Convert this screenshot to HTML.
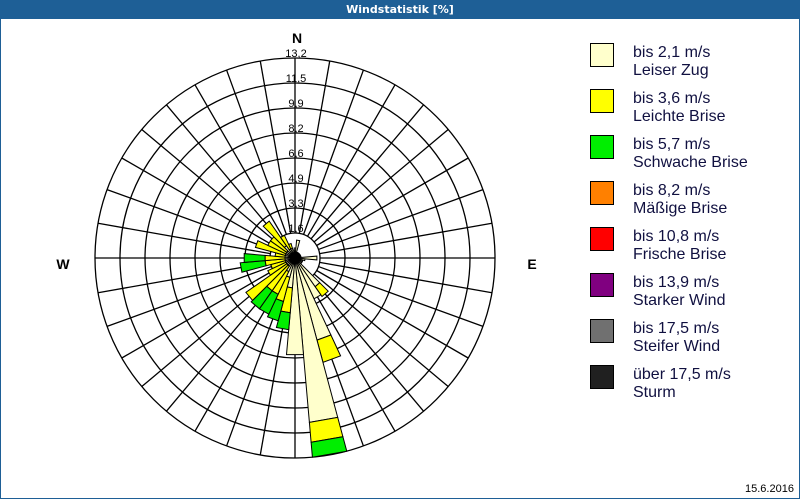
<!DOCTYPE html>
<html><head><meta charset="utf-8"><style>
html,body{margin:0;padding:0;background:#fff}
#w{position:relative;width:798px;height:498px;border:1px solid #1e5f96;border-top:none;overflow:hidden;font-family:"Liberation Sans",sans-serif}
#t{height:19px;background:#1e5f96;color:#fff;font:bold 11px "DejaVu Sans","Liberation Sans",sans-serif;text-align:center;line-height:19px}
.lg{position:absolute;left:589px;width:22px;height:22px;border:1px solid #000}
.lt{position:absolute;left:632px;font-size:16px;line-height:18px;color:#101040}
</style></head><body><div id="w">
<div id="t">Windstatistik [%]</div>
<svg id="s" width="560" height="480" style="position:absolute;left:0;top:0" font-family="Liberation Sans, sans-serif"></svg>
<div class="lg" style="top:43px;background:#ffffcc"></div><div class="lt" style="top:44px">bis 2,1 m/s<br>Leiser Zug</div>
<div class="lg" style="top:89px;background:#ffff00"></div><div class="lt" style="top:90px">bis 3,6 m/s<br>Leichte Brise</div>
<div class="lg" style="top:135px;background:#00ee00"></div><div class="lt" style="top:136px">bis 5,7 m/s<br>Schwache Brise</div>
<div class="lg" style="top:181px;background:#ff8000"></div><div class="lt" style="top:182px">bis 8,2 m/s<br>Mäßige Brise</div>
<div class="lg" style="top:227px;background:#ff0000"></div><div class="lt" style="top:228px">bis 10,8 m/s<br>Frische Brise</div>
<div class="lg" style="top:273px;background:#800080"></div><div class="lt" style="top:274px">bis 13,9 m/s<br>Starker Wind</div>
<div class="lg" style="top:319px;background:#707070"></div><div class="lt" style="top:320px">bis 17,5 m/s<br>Steifer Wind</div>
<div class="lg" style="top:365px;background:#202020"></div><div class="lt" style="top:366px">über 17,5 m/s<br>Sturm</div>
<div style="position:absolute;left:744px;top:483px;font-size:11px;color:#000">15.6.2016</div>
</div>
<script>
var s=document.getElementById('s'),cx=294,cy=258,h='';
for(var r=25;r<=200;r+=25)h+='<circle cx="'+cx+'" cy="'+cy+'" r="'+r+'" fill="none" stroke="#000" stroke-width="1.3"/>';
for(var a=0;a<360;a+=10){var t=a*Math.PI/180,sx=Math.sin(t),cy_=-Math.cos(t);
h+='<line x1="'+(cx+25*sx)+'" y1="'+(cy+25*cy_)+'" x2="'+(cx+200*sx)+'" y2="'+(cy+200*cy_)+'" stroke="#000" stroke-width="1.3"/>';}
var labs=['1,6','3,3','4,9','6,6','8,2','9,9','11,5','13,2'];
for(var i=0;i<8;i++)h+='<text x="295" y="'+(cy-25*(i+1)-1)+'" font-size="11" text-anchor="middle" fill="#000">'+labs[i]+'</text>';
h+='<text x="296" y="43" font-size="14" font-weight="bold" text-anchor="middle">N</text>';
h+='<text x="296" y="494" font-size="14" font-weight="bold" text-anchor="middle">S</text>';
h+='<text x="62" y="269" font-size="14" font-weight="bold" text-anchor="middle">W</text>';
h+='<text x="531" y="269" font-size="14" font-weight="bold" text-anchor="middle">E</text>';
var cols=['#ffffcc','#ffff00','#00ee00'];
var d={170:[165,185,200],180:[97],160:[85,108],150:[45],140:[35,47],190:[30,55,72],200:[20,45,65],210:[15,40,62],220:[10,40,62],230:[10,60],240:[10,30],250:[10,25],260:[10,30,55],270:[10,30,51],280:[10,20],290:[10,41],300:[10,30],310:[10,30],320:[15,45],330:[10,25],340:[10,15],350:[8],0:[10],10:[18],20:[6],30:[6],40:[6],50:[6],60:[6],70:[6],80:[6],90:[22],100:[10],110:[8],120:[8],130:[8]};
function P(r,a){var t=a*Math.PI/180;return (cx+r*Math.sin(t)).toFixed(1)+','+(cy-r*Math.cos(t)).toFixed(1);}
for(var k in d){var a=+k,v=d[k],r0=0;for(var j=0;j<v.length;j++){var r1=v[j];
h+='<polygon points="'+P(r0,a-5)+' '+P(r1,a-5)+' '+P(r1,a+5)+' '+P(r0,a+5)+'" fill="'+cols[j]+'" stroke="#000" stroke-width="1"/>';r0=r1;}}
h+='<circle cx="'+cx+'" cy="'+cy+'" r="5" fill="#000"/>';
s.innerHTML=h;
</script>
</body></html>
